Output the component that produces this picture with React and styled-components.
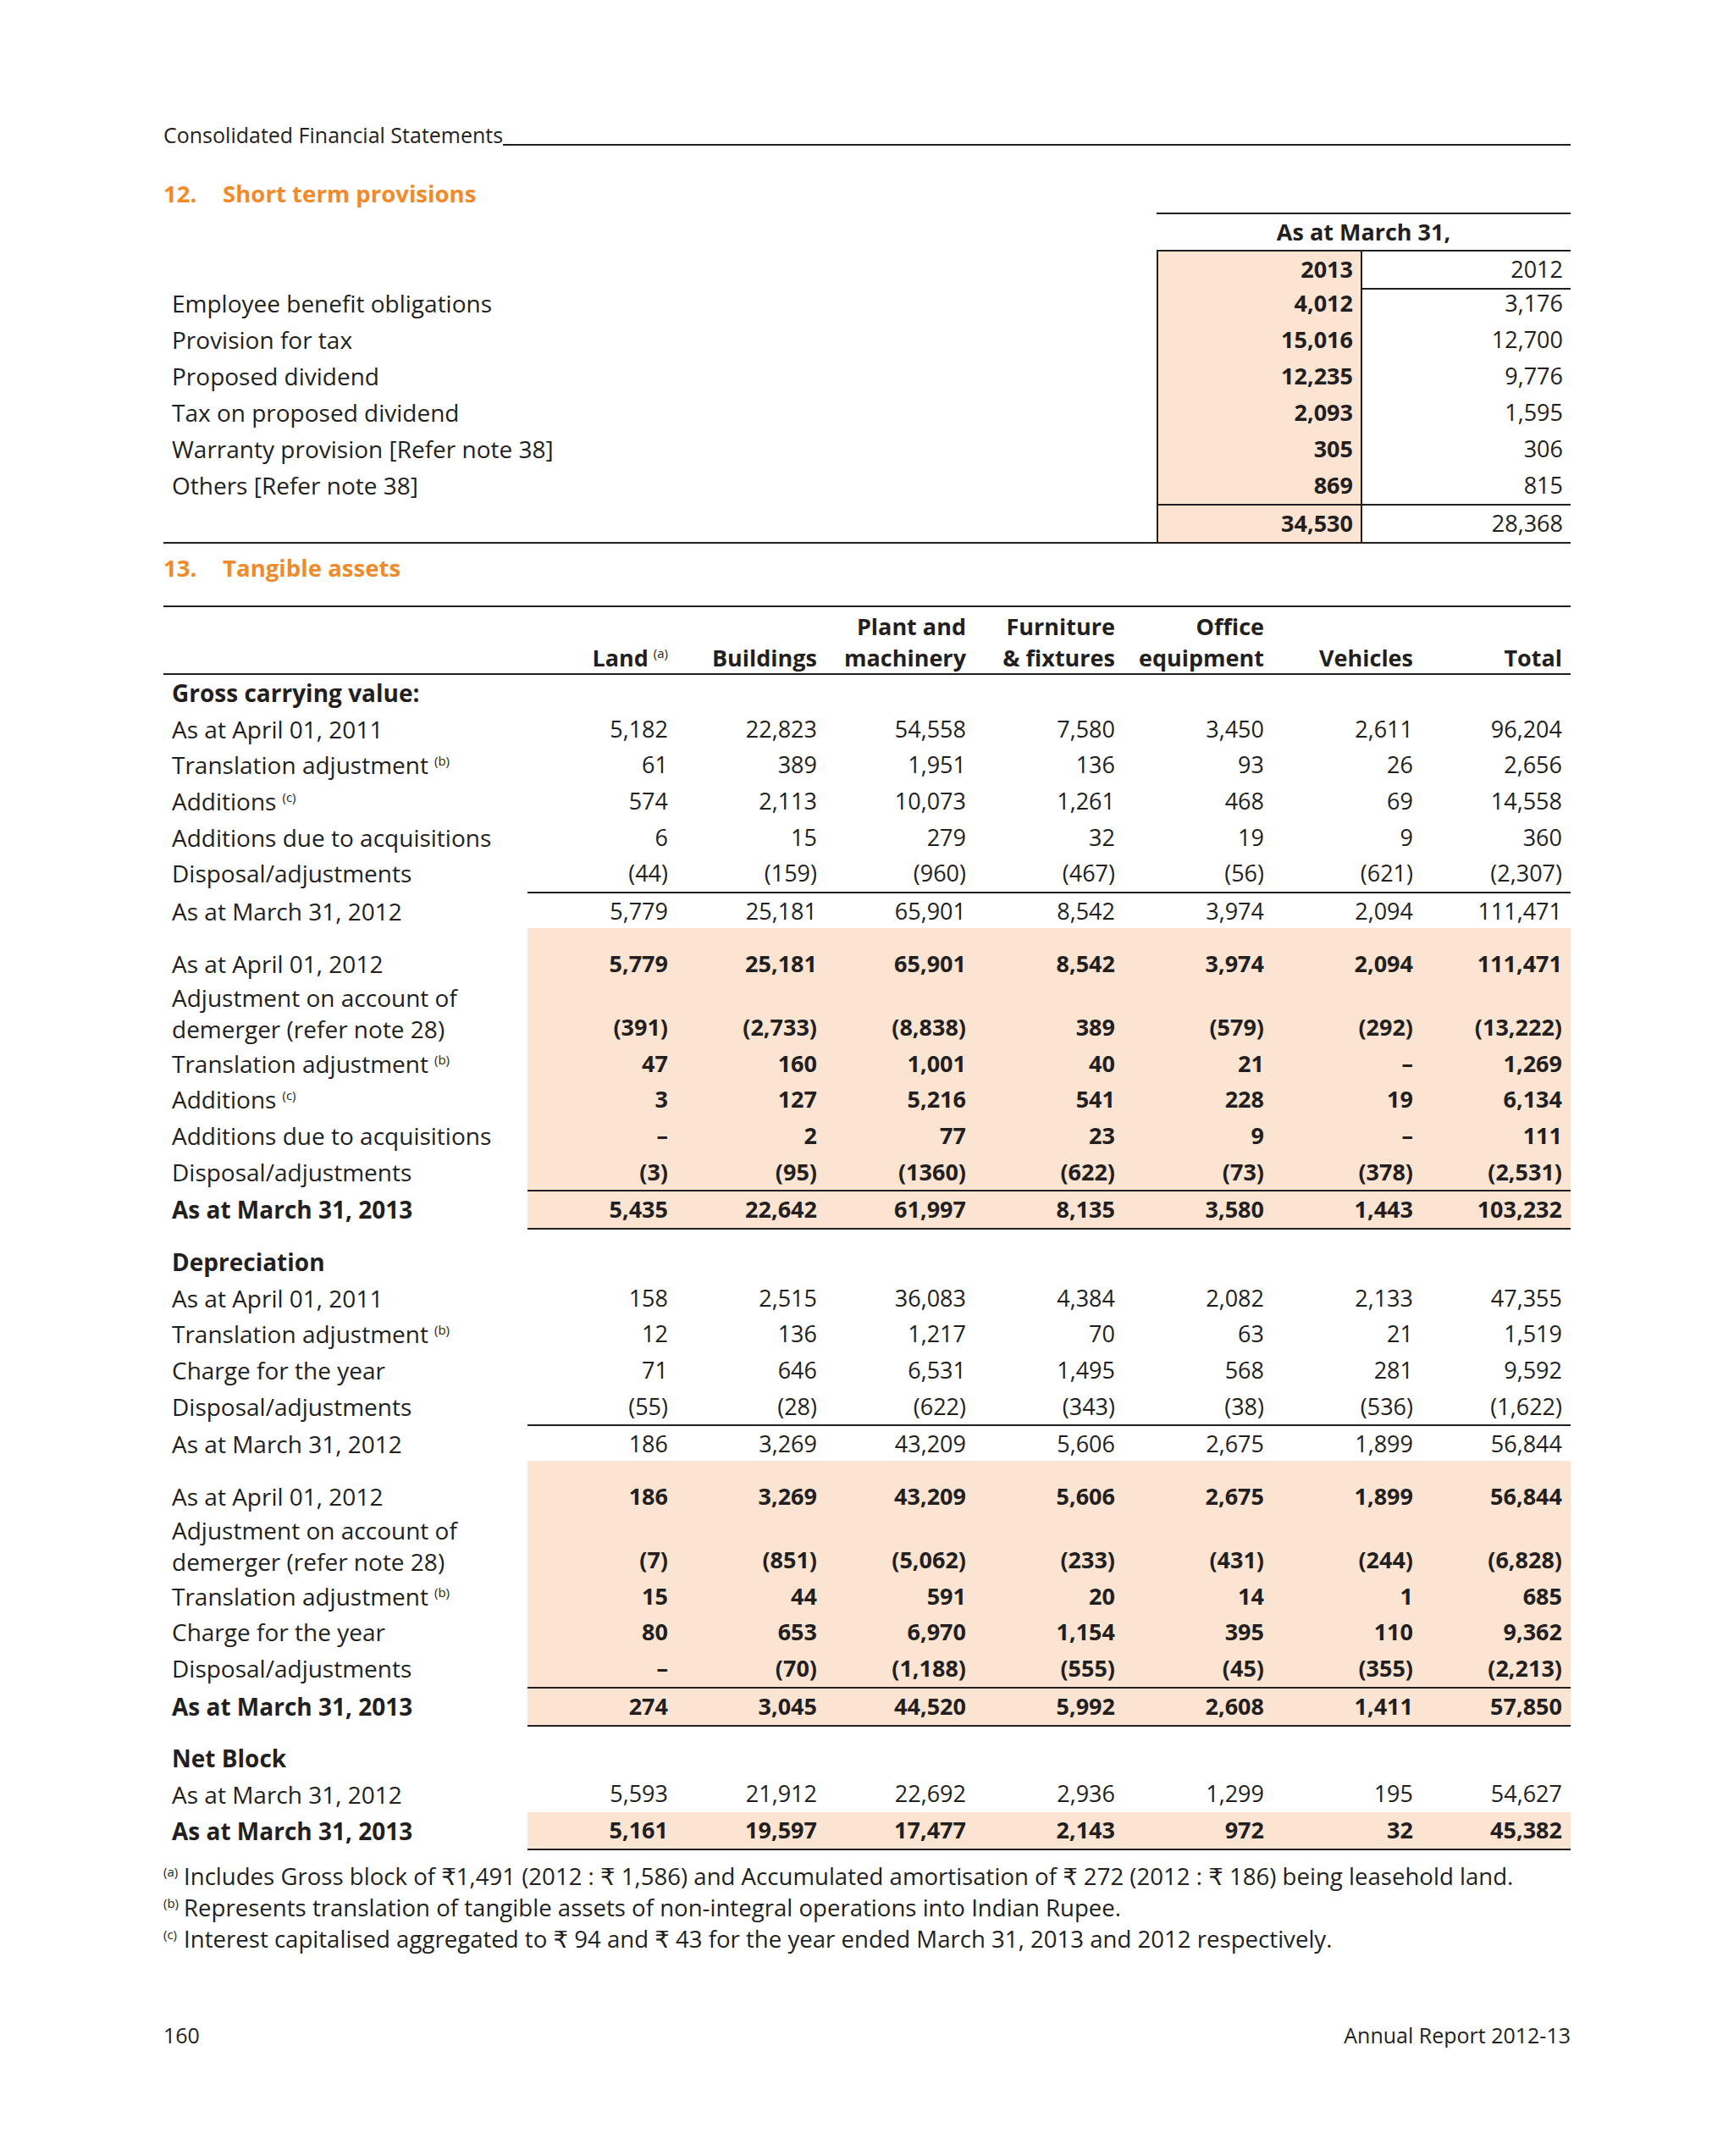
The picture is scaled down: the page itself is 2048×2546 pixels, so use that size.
import React from 'react'
import styled, { createGlobalStyle } from 'styled-components'

const GlobalStyle = createGlobalStyle`
  body {
    margin: 0;
    background: #ffffff;
    color: #231f20;
    font-family: "Open Sans", "DejaVu Sans", sans-serif;
  }
`

const INK = '#231f20'
const SHADE = '#fce4d2'
const ROW = 42.7
const line = w => `${w}px solid ${INK}`

const Page = styled.div`
  width: 2048px;
  box-sizing: border-box;
  padding: 144px 193px 0;
`

const Header = styled.div`
  display: flex;
  align-items: flex-end;
  height: 30px;
`

const HeaderText = styled.span`
  font-size: 25px;
  line-height: 30px;
`

const HeaderRule = styled.div`
  flex: 1;
  border-bottom: ${line(2)};
  margin-bottom: 2px;
`

const SectionTitle = styled.h2`
  margin: ${p => p.$top}px 0 0;
  display: flex;
  font-size: 27.6px;
  line-height: 36px;
  font-weight: 700;
  color: #f08a2a;
`

const SectionNum = styled.span`
  width: 70px;
`

const Table = styled.div`
  margin-top: ${p => p.$top}px;
`

const GridRow = styled.div`
  display: grid;
  grid-template-columns: ${p => p.$cols};
  height: ${p => p.$h || ROW}px;
`

const Cell = styled.div`
  box-sizing: border-box;
  display: flex;
  align-items: ${p => (p.$end ? 'flex-end' : 'center')};
  justify-content: ${p => p.$justify || 'flex-end'};
  text-align: right;
  padding-right: ${p => p.$pr ?? 10}px;
  font-size: 27px;
  line-height: ${p => p.$lh || ROW}px;
  white-space: nowrap;
  font-weight: ${p => (p.$bold ? 700 : 400)};
  background: ${p => (p.$shade ? SHADE : 'transparent')};
  border-top: ${p => (p.$top ? line(2) : 'none')};
  border-bottom: ${p => (p.$bottom ? line(p.$bottom === 'thick' ? 2.5 : 2) : 'none')};
  border-left: ${p => (p.$left ? line(2) : 'none')};
  border-right: ${p => (p.$right ? line(2) : 'none')};
`

const LabelCell = styled(Cell)`
  justify-content: flex-start;
  text-align: left;
  padding: 0 0 0 10px;
  font-size: 28px;
  white-space: ${p => (p.$end ? 'normal' : 'nowrap')};
`

const Sup = styled.sup`
  font-size: 15px;
  font-weight: 400;
  line-height: 0;
  vertical-align: 10px;
  margin-left: ${p => p.$gap ?? 7}px;
`

const Notes = styled.div`
  margin-top: 14px;
  font-size: 27.6px;
  line-height: 37px;
`

const Note = styled.div`
  white-space: nowrap;
`

const NoteMark = styled.span`
  display: inline-block;
  width: 24px;
  font-size: 15px;
  line-height: 0;
  vertical-align: 10px;
`

const Footer = styled.div`
  margin-top: 80px;
  display: flex;
  justify-content: space-between;
  font-size: 25px;
  line-height: 30px;
`

const T12 = '1fr 243px 246px'
const T13 = '430px repeat(7, 176px)'

const provisions = [
  ['Employee benefit obligations', '4,012', '3,176'],
  ['Provision for tax', '15,016', '12,700'],
  ['Proposed dividend', '12,235', '9,776'],
  ['Tax on proposed dividend', '2,093', '1,595'],
  ['Warranty provision [Refer note 38]', '305', '306'],
  ['Others [Refer note 38]', '869', '815'],
]

const ADJ = 'adj'

const grossOld = [
  ['As at April 01, 2011', ['5,182', '22,823', '54,558', '7,580', '3,450', '2,611', '96,204']],
  ['Translation adjustment', ['61', '389', '1,951', '136', '93', '26', '2,656'], 'b'],
  ['Additions', ['574', '2,113', '10,073', '1,261', '468', '69', '14,558'], 'c'],
  ['Additions due to acquisitions', ['6', '15', '279', '32', '19', '9', '360']],
  ['Disposal/adjustments', ['(44)', '(159)', '(960)', '(467)', '(56)', '(621)', '(2,307)']],
]
const grossOldTotal = ['As at March 31, 2012', ['5,779', '25,181', '65,901', '8,542', '3,974', '2,094', '111,471']]

const grossNew = [
  ['As at April 01, 2012', ['5,779', '25,181', '65,901', '8,542', '3,974', '2,094', '111,471']],
  [ADJ, ['(391)', '(2,733)', '(8,838)', '389', '(579)', '(292)', '(13,222)']],
  ['Translation adjustment', ['47', '160', '1,001', '40', '21', '–', '1,269'], 'b'],
  ['Additions', ['3', '127', '5,216', '541', '228', '19', '6,134'], 'c'],
  ['Additions due to acquisitions', ['–', '2', '77', '23', '9', '–', '111']],
  ['Disposal/adjustments', ['(3)', '(95)', '(1360)', '(622)', '(73)', '(378)', '(2,531)']],
]
const grossNewTotal = ['As at March 31, 2013', ['5,435', '22,642', '61,997', '8,135', '3,580', '1,443', '103,232']]

const depOld = [
  ['As at April 01, 2011', ['158', '2,515', '36,083', '4,384', '2,082', '2,133', '47,355']],
  ['Translation adjustment', ['12', '136', '1,217', '70', '63', '21', '1,519'], 'b'],
  ['Charge for the year', ['71', '646', '6,531', '1,495', '568', '281', '9,592']],
  ['Disposal/adjustments', ['(55)', '(28)', '(622)', '(343)', '(38)', '(536)', '(1,622)']],
]
const depOldTotal = ['As at March 31, 2012', ['186', '3,269', '43,209', '5,606', '2,675', '1,899', '56,844']]

const depNew = [
  ['As at April 01, 2012', ['186', '3,269', '43,209', '5,606', '2,675', '1,899', '56,844']],
  [ADJ, ['(7)', '(851)', '(5,062)', '(233)', '(431)', '(244)', '(6,828)']],
  ['Translation adjustment', ['15', '44', '591', '20', '14', '1', '685'], 'b'],
  ['Charge for the year', ['80', '653', '6,970', '1,154', '395', '110', '9,362']],
  ['Disposal/adjustments', ['–', '(70)', '(1,188)', '(555)', '(45)', '(355)', '(2,213)']],
]
const depNewTotal = ['As at March 31, 2013', ['274', '3,045', '44,520', '5,992', '2,608', '1,411', '57,850']]

const netOld = ['As at March 31, 2012', ['5,593', '21,912', '22,692', '2,936', '1,299', '195', '54,627']]
const netNew = ['As at March 31, 2013', ['5,161', '19,597', '17,477', '2,143', '972', '32', '45,382']]

const AssetRow = ({ item, bold, boldLabel, shade, top, bottom }) => {
  const [label, values, note] = item
  const wrap = label === ADJ
  return (
    <GridRow $cols={T13} $h={wrap ? 75 : ROW}>
      <LabelCell $end={wrap} $lh={wrap ? 37.5 : ROW} $bold={boldLabel}>
        <span>
          {wrap ? <>Adjustment on account of<br />demerger (refer note 28)</> : label}
          {note && <Sup>({note})</Sup>}
        </span>
      </LabelCell>
      {values.map((v, i) => (
        <Cell key={i} $end={wrap} $bold={bold} $shade={shade} $top={top} $bottom={bottom}>{v}</Cell>
      ))}
    </GridRow>
  )
}

const Spacer = ({ h, shade }) => (
  <GridRow $cols={T13} $h={h}>
    <LabelCell />
    {Array.from({ length: 7 }).map((_, i) => <Cell key={i} $shade={shade} />)}
  </GridRow>
)

const Heading = ({ children }) => (
  <GridRow $cols={T13}>
    <LabelCell $bold>{children}</LabelCell>
  </GridRow>
)

const App = () => {
  return (
    <Page>
      <GlobalStyle />
      <Header>
        <HeaderText>Consolidated Financial Statements</HeaderText>
        <HeaderRule />
      </Header>

      <SectionTitle $top={36}>
        <SectionNum>12.</SectionNum>Short term provisions
      </SectionTitle>

      <Table $top={5}>
        <GridRow $cols={T12} $h={44}>
          <LabelCell />
          <Cell $top $bold $pr={0} $justify="center" style={{ gridColumn: 'span 2' }}>As at March 31,</Cell>
        </GridRow>
        <GridRow $cols={T12} $h={42}>
          <LabelCell />
          <Cell $top $bottom $left $right $bold $shade $pr={9}>2013</Cell>
          <Cell $top $bottom $pr={9}>2012</Cell>
        </GridRow>
        {provisions.map(([label, a, b]) => (
          <GridRow key={label} $cols={T12} $h={43}>
            <LabelCell>{label}</LabelCell>
            <Cell $left $right $bold $shade $pr={9}>{a}</Cell>
            <Cell $pr={9}>{b}</Cell>
          </GridRow>
        ))}
        <GridRow $cols={T12} $h={41}>
          <LabelCell $bottom />
          <Cell $top $bottom $left $right $bold $shade $pr={9}>34,530</Cell>
          <Cell $top $bottom $pr={9}>28,368</Cell>
        </GridRow>
      </Table>

      <SectionTitle $top={16}>
        <SectionNum>13.</SectionNum>Tangible assets
      </SectionTitle>

      <Table $top={27}>
        <GridRow $cols={T13} $h={82}>
          <Cell $top $bottom />
          <Cell $top $bottom $end $bold $lh={37}><span>Land<Sup $gap={6}>(a)</Sup></span></Cell>
          <Cell $top $bottom $end $bold $lh={37}>Buildings</Cell>
          <Cell $top $bottom $end $bold $lh={37}><span>Plant and<br />machinery</span></Cell>
          <Cell $top $bottom $end $bold $lh={37}><span>Furniture<br />&amp; fixtures</span></Cell>
          <Cell $top $bottom $end $bold $lh={37}><span>Office<br />equipment</span></Cell>
          <Cell $top $bottom $end $bold $lh={37}>Vehicles</Cell>
          <Cell $top $bottom $end $bold $lh={37}>Total</Cell>
        </GridRow>

        <Heading>Gross carrying value:</Heading>
        {grossOld.map(item => <AssetRow key={item[0]} item={item} />)}
        <AssetRow item={grossOldTotal} top bottom="thick" />
        <Spacer h={21} shade />
        {grossNew.map(item => <AssetRow key={item[0]} item={item} bold shade />)}
        <AssetRow item={grossNewTotal} bold boldLabel shade top bottom />
        <Spacer h={21} />

        <Heading>Depreciation</Heading>
        {depOld.map(item => <AssetRow key={item[0]} item={item} />)}
        <AssetRow item={depOldTotal} top bottom="thick" />
        <Spacer h={21} shade />
        {depNew.map(item => <AssetRow key={item[0]} item={item} bold shade />)}
        <AssetRow item={depNewTotal} bold boldLabel shade top bottom />
        <Spacer h={20} />

        <Heading>Net Block</Heading>
        <AssetRow item={netOld} bottom />
        <AssetRow item={netNew} bold boldLabel shade bottom />
      </Table>

      <Notes>
        <Note>
          <NoteMark>(a)</NoteMark>
          Includes Gross block of ₹1,491 (2012 : ₹ 1,586) and Accumulated amortisation of ₹ 272 (2012 : ₹ 186) being leasehold land.
        </Note>
        <Note>
          <NoteMark>(b)</NoteMark>
          Represents translation of tangible assets of non-integral operations into Indian Rupee.
        </Note>
        <Note>
          <NoteMark>(c)</NoteMark>
          Interest capitalised aggregated to ₹ 94 and ₹ 43 for the year ended March 31, 2013 and 2012 respectively.
        </Note>
      </Notes>

      <Footer>
        <span>160</span>
        <span>Annual Report 2012-13</span>
      </Footer>
    </Page>
  )
}

export default App
